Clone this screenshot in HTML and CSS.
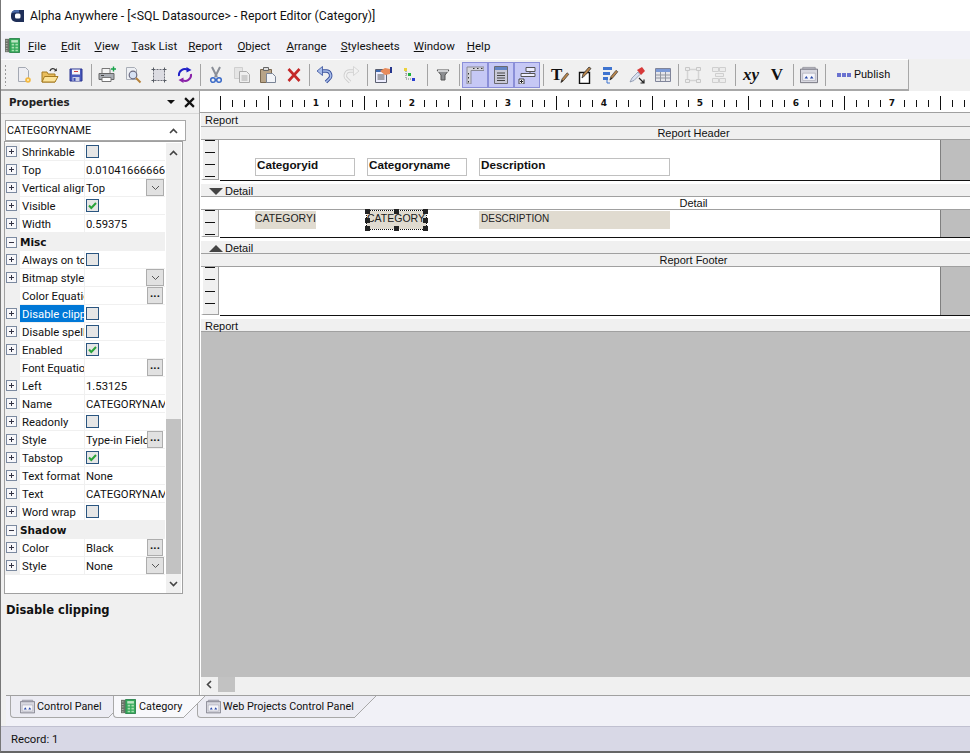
FILE: index.html
```html
<!DOCTYPE html>
<html lang="en">
<head>
    <meta charset="UTF-8">
    <title>Alpha Anywhere - Report Editor</title>
    <link rel="stylesheet" href="styles.css">
</head>
<body>

<svg class="defs" width="0" height="0">
    <symbol id="i-new" viewBox="0 0 18 18"><path d="M3.500 1.500h7l3 3v11h-10z" fill="#eeeef3" stroke="#a4a9b3"/><circle cx="13" cy="14" r="2.800" fill="#f4b942"/><circle cx="13" cy="14" r="1" fill="#fff3c8"/></symbol>
    <symbol id="i-open" viewBox="0 0 18 18"><path d="M1 6h5l1 2h7v8H1z" fill="#e9bd5c" stroke="#a47a20"/><path d="M1 16l2.500-5.500H17L14 16z" fill="#fbe39a" stroke="#a47a20"/><path d="M9 5c1-3 4-3 5.500-1" fill="none" stroke="#333" stroke-width="1.300"/><path d="M13 5.500l3-.5-.5-3z" fill="#333"/></symbol>
    <symbol id="i-save" viewBox="0 0 18 18"><path d="M3 3h12v12H3z" fill="#4a5abc" stroke="#2b3490"/><path d="M5 3.500h8v5H5z" fill="#f4f4f8"/><path d="M7 5h4v1H7z" fill="#d04040"/><path d="M5.500 11h7v4h-7z" fill="#c9cde6"/><path d="M6.500 12h2v3h-2z" fill="#3f4fb4"/></symbol>
    <symbol id="i-print" viewBox="0 0 18 18"><path d="M4 2.500h8v5H4z" fill="#f4f4f4" stroke="#777"/><path d="M1 7.500h15v6H1z" fill="#a9adb3" stroke="#666"/><path d="M4 11.500h9v4H4z" fill="#fff" stroke="#777"/><path d="M3 9h3v1H3z" fill="#444"/><path d="M13 3h5M15.500 .5v5" stroke="#16a34a" stroke-width="1.400"/></symbol>
    <symbol id="i-preview" viewBox="0 0 18 18"><path d="M2.500 1.500h8l2 2v10h-10z" fill="#eef0f4" stroke="#a8adb6"/><circle cx="9" cy="9" r="3.800" fill="#d7e2f5" stroke="#6a6a80" stroke-width="1.200"/><path d="M12 12l4.500 4.500" stroke="#b5813a" stroke-width="2"/></symbol>
    <symbol id="i-frame" viewBox="0 0 18 18"><path d="M3.500 3.500h11v11h-11z" fill="#dcdce2" stroke="#6d6f78" stroke-dasharray="2 1"/><path d="M1.500 3.500h3M13.500 3.500h3M1.500 14.500h3M13.500 14.500h3M3.500 1.500v3M14.500 1.500v3M3.500 13.500v3M14.500 13.500v3" stroke="#555a62"/></symbol>
    <symbol id="i-refresh" viewBox="0 0 18 18"><path d="M3 10a6 6 0 0 1 9-6" fill="none" stroke="#2020c8" stroke-width="2"/><path d="M10.500 1l5 3-5 2.500z" fill="#2020c8"/><path d="M15 8a6 6 0 0 1-9 6" fill="none" stroke="#8a22a8" stroke-width="2"/><path d="M7.500 17l-5-3 5-2.500z" fill="#8a22a8"/></symbol>
    <symbol id="i-cut" viewBox="0 0 18 18"><path d="M5 1l5 10M13 1L8 11" stroke="#8a8f98" stroke-width="2"/><circle cx="6" cy="14" r="2.300" fill="none" stroke="#3a6ac8" stroke-width="1.500"/><circle cx="12" cy="14" r="2.300" fill="none" stroke="#3a6ac8" stroke-width="1.500"/></symbol>
    <symbol id="i-copy" viewBox="0 0 18 18"><path d="M1.500 1.500h8v11h-8z" fill="#e5e5e5" stroke="#cfcfcf"/><path d="M6.500 5.500h7l3 3v8h-10z" fill="#eee" stroke="#ababab"/><path d="M8.500 10h6M8.500 12h6M8.500 14h6" stroke="#aaa"/></symbol>
    <symbol id="i-paste" viewBox="0 0 18 18"><path d="M1.500 3.500h11v13h-11z" fill="#b8a488" stroke="#7a6850"/><path d="M4.500 1.500h5v3h-5z" fill="#ddd" stroke="#666"/><path d="M7.500 7.500h6l3 3v6h-9z" fill="#f2f4f8" stroke="#7a8496"/></symbol>
    <symbol id="i-del" viewBox="0 0 18 18"><path d="M3.500 3l11 12M14.500 3l-11 12" stroke="#c42828" stroke-width="2.600"/></symbol>
    <symbol id="i-undo" viewBox="0 0 18 18"><path d="M5 5h5a4.500 4.500 0 0 1 3 8l-3 3" fill="none" stroke="#38509c" stroke-width="3.400"/><path d="M5 5h5a4.500 4.500 0 0 1 3 8l-3 3" fill="none" stroke="#a9bde9" stroke-width="1.600"/><path d="M6.500 .5L1 5l5.500 4.500z" fill="#a9bde9" stroke="#38509c" stroke-width=".8"/></symbol>
    <symbol id="i-redo" viewBox="0 0 18 18"><path d="M13 5H8a4.500 4.500 0 0 0-3 8l3 3" fill="none" stroke="#cfcfcf" stroke-width="3.400"/><path d="M13 5H8a4.500 4.500 0 0 0-3 8l3 3" fill="none" stroke="#f2f2f2" stroke-width="1.600"/><path d="M11.500 .5L17 5l-5.500 4.500z" fill="#f2f2f2" stroke="#cfcfcf" stroke-width=".8"/></symbol>
    <symbol id="i-form" viewBox="0 0 18 18"><path d="M1.500 3.500h11v13h-11z" fill="#eef" stroke="#5a5f70"/><path d="M2 4h10v2H2z" fill="#3f6ab0"/><path d="M3.500 9h7M3.500 11h7M3.500 13h7" stroke="#555"/><path d="M6 5l5-3 5 1v5l-5 1z" fill="#e88c5c"/><path d="M16 1h2v6h-2z" fill="#26368c"/></symbol>
    <symbol id="i-tree" viewBox="0 0 18 18"><path d="M6 5v8h6M6 8h3" stroke="#777" fill="none" stroke-dasharray="1 1"/><path d="M4 2h3v3H4z" fill="#ecd23c"/><path d="M8 7h3v3H8z" fill="#1fb33a"/><path d="M12 12h3v3h-3z" fill="#2a3fd0"/></symbol>
    <symbol id="i-filter" viewBox="0 0 18 18"><path d="M3 4h12l-4 5v5H7V9z" fill="#8b8d90" stroke="#555"/><path d="M4 4h10v2H4z" fill="#cfd0d2"/></symbol>
    <symbol id="i-ruler" viewBox="0 0 18 18"><path d="M1 1h17v3.500H5V18H1z" fill="#d4d4dc" stroke="#8a8a96"/><path d="M7 2.500h1.500M11 2.500h1.500M15 2.500h1.500M2.500 7v1.500M2.500 11v1.500M2.500 15v1.500" stroke="#333"/></symbol>
    <symbol id="i-sect" viewBox="0 0 18 18"><path d="M2.500 .5h13v17h-13z" fill="#c9c9d8" stroke="#6a6a70"/><path d="M3 1h12v3H3z" fill="#6384c4"/><path d="M5 7h8M5 9.500h8M5 12h8M5 14.500h8" stroke="#444"/></symbol>
    <symbol id="i-group" viewBox="0 0 18 18"><path d="M8 1.500h9v4H8zM3 7.500h14v3H3z" fill="#eef" stroke="#555"/><path d="M1 13h5v5H1z" fill="#fff" stroke="#444"/><path d="M2 15.500h3M3.500 14v3" stroke="#222"/><path d="M12 6v1" stroke="#555"/></symbol>
    <symbol id="i-pen" viewBox="0 0 18 18"><path d="M4 16l1.500-5 7-8.500 2.500 2-7 8.500z" fill="#b9854a" stroke="#333" stroke-width=".9"/><path d="M4 16l1.500-4 2 1.700z" fill="#222"/></symbol>
    <symbol id="i-box" viewBox="0 0 18 18"><path d="M3.500 6.500h10v11h-10z" fill="#fff" stroke="#111" stroke-width="1.400"/><path d="M6 12l1-4 6-7 2 1.500-6 7z" fill="#b9854a" stroke="#333" stroke-width=".8"/></symbol>
    <symbol id="i-list" viewBox="0 0 18 18"><path d="M1 1h9v3H1zM1 6h7v3H1zM1 11h5v3H1z" fill="#3f74d0"/><path d="M5 14v3h3" stroke="#3f74d0" fill="none"/><use href="#i-pen" x="5" y="0" width="13" height="18"/></symbol>
    <symbol id="i-pin" viewBox="0 0 18 18"><path d="M9 4l5-3 3 4-4 4z" fill="#d83a3a"/><path d="M10 6L4 12l-2 4 4-1.500 6-6z" fill="#d8e0f0" stroke="#7a86a0" stroke-width=".7"/><path d="M11 12l5 5M16 13.500V17h-3.500" stroke="#222" fill="none" stroke-width="1.200"/></symbol>
    <symbol id="i-table" viewBox="0 0 18 18"><path d="M1.500 2.500h15v13h-15z" fill="#e6e6ea" stroke="#80859a"/><path d="M2 3h14v3H2z" fill="#7c9ad6"/><path d="M6.500 6v9M11.500 6v9M2 9h14M2 12h14" stroke="#90959f"/></symbol>
    <symbol id="i-align" viewBox="0 0 18 18"><path d="M3.500 3.500h11v11h-11z" fill="none" stroke="#d4d4d4" stroke-width="1.500"/><path d="M1.500 1.500h4v3h-4zM12.500 1.500h4v3h-4zM1.500 13.500h4v3h-4zM12.500 13.500h4v3h-4z" fill="#ececec" stroke="#c8c8c8"/></symbol>
    <symbol id="i-size" viewBox="0 0 18 18"><path d="M2.500 1.500h6v4h-6zM9.500 1.500h6v4h-6zM5.500 7.500h8v3h-8zM2.500 12.500h6v4h-6zM9.500 12.500h6v4h-6z" fill="#ececec" stroke="#cfcfcf"/></symbol>
    <symbol id="i-panel" viewBox="0 0 20 18"><path d="M.5 2.500h19v15H.5z" fill="#d8d8e0" stroke="#6c6c78"/><path d="M3 .5h14v2H3z" fill="#b6b6c0" stroke="#7c7c88" stroke-width=".6"/><path d="M3 7h14v8H3z" fill="#f5f5fa" stroke="#9a9aa6" stroke-width=".6"/><path d="M5 13l2-3 2 3zM11 13l2-3 2 3z" fill="#2a4aa8"/></symbol>
    <symbol id="i-sheet" viewBox="0 0 18 18"><path d="M5.500 .5h12v17h-12z" fill="#35a85a" stroke="#1e7a40"/><path d="M0 1h5v16H0z" fill="#6d736a"/><path d="M1 3h2v1H1zM1 6h2v1H1zM1 9h2v1H1zM1 12h2v1H1zM1 15h2v1H1z" fill="#c8ccc4"/><path d="M7.500 2.500h8v3h-8z" fill="#bfe6c4"/><path d="M8 7h3v2H8zM12.500 7h3v2h-3zM8 10.500h3v2H8zM12.500 10.500h3v2h-3zM8 14h3v2H8zM12.500 14h3v2h-3z" fill="#a8e0b0"/></symbol>
    <symbol id="i-check" viewBox="0 0 11 11"><path d="M2 5.500l2.300 2.500L9 3" fill="none" stroke="#2aa33a" stroke-width="2"/></symbol>
</svg>

<div class="app">
    <div class="titlebar">
        <svg class="app-logo" viewBox="0 0 14 14"><path d="M6 1h8v12H6a5 5 0 0 1-5-5V6a5 5 0 0 1 5-5z" fill="#1f2f58"/><path d="M1.500 4a5 5 0 0 1 4.500-3h3v2.500H5z" fill="#4a6aa8"/><rect x="5" y="4.500" width="5.500" height="5" rx="1.500" fill="#fff"/></svg>
        <span>Alpha Anywhere - [&lt;SQL Datasource&gt; - Report Editor (Category)]</span>
    </div>

    <div class="menubar">
        <svg class="menu-icon"><use href="#i-sheet"/></svg>
        <span class="menu-item m-wide"><u>F</u>ile</span>
        <span class="menu-item"><u>E</u>dit</span>
        <span class="menu-item m-tight"><u>V</u>iew</span>
        <span class="menu-item m-tighter"><u>T</u>ask List</span>
        <span class="menu-item m-wide"><u>R</u>eport</span>
        <span class="menu-item m-widest"><u>O</u>bject</span>
        <span class="menu-item"><u>A</u>rrange</span>
        <span class="menu-item"><u>S</u>tylesheets</span>
        <span class="menu-item m-tight"><u>W</u>indow</span>
        <span class="menu-item"><u>H</u>elp</span>
    </div>

    <div class="toolbar">
        <span class="grip"></span>
        <span class="tool"><svg><use href="#i-new"/></svg></span>
        <span class="tool"><svg><use href="#i-open"/></svg></span>
        <span class="tool"><svg><use href="#i-save"/></svg></span>
        <span class="sep"></span>
        <span class="tool"><svg><use href="#i-print"/></svg></span>
        <span class="tool"><svg><use href="#i-preview"/></svg></span>
        <span class="tool"><svg><use href="#i-frame"/></svg></span>
        <span class="tool"><svg><use href="#i-refresh"/></svg></span>
        <span class="sep"></span>
        <span class="tool"><svg><use href="#i-cut"/></svg></span>
        <span class="tool"><svg><use href="#i-copy"/></svg></span>
        <span class="tool"><svg><use href="#i-paste"/></svg></span>
        <span class="tool"><svg><use href="#i-del"/></svg></span>
        <span class="sep"></span>
        <span class="tool"><svg><use href="#i-undo"/></svg></span>
        <span class="tool"><svg><use href="#i-redo"/></svg></span>
        <span class="sep sep-wide"></span>
        <span class="tool"><svg><use href="#i-form"/></svg></span>
        <span class="tool"><svg><use href="#i-tree"/></svg></span>
        <span class="sep sep-left"></span>
        <span class="tool"><svg><use href="#i-filter"/></svg></span>
        <span class="sep sep-wide"></span>
        <span class="tool tool-on"><svg><use href="#i-ruler"/></svg></span>
        <span class="tool tool-on"><svg><use href="#i-sect"/></svg></span>
        <span class="tool tool-on"><svg><use href="#i-group"/></svg></span>
        <span class="sep sep-wide"></span>
        <span class="tool tool-t">T<svg class="tool-t-pen"><use href="#i-pen"/></svg></span>
        <span class="tool"><svg><use href="#i-box"/></svg></span>
        <span class="tool"><svg><use href="#i-list"/></svg></span>
        <span class="tool"><svg><use href="#i-pin"/></svg></span>
        <span class="tool"><svg><use href="#i-table"/></svg></span>
        <span class="sep sep-tight"></span>
        <span class="tool"><svg><use href="#i-align"/></svg></span>
        <span class="tool"><svg><use href="#i-size"/></svg></span>
        <span class="sep sep-wide"></span>
        <span class="tool tool-serif"><i>xy</i></span>
        <span class="tool tool-serif">V</span>
        <span class="sep sep-wide"></span>
        <span class="tool"><svg><use href="#i-panel"/></svg></span>
        <span class="sep sep-wide"></span>
        <span class="publish"><span class="publish-dots"><b></b><b></b><b></b></span>Publish</span>
    </div>

    <div class="main">
        <div class="props-panel">
            <div class="props-head">
                <span class="props-title">Properties</span>
                <span class="props-arrow"></span>
                <svg class="props-close" viewBox="0 0 10 10"><path d="M1 1l8 8M9 1l-8 8" stroke="#111" stroke-width="2"/></svg>
            </div>
            <div class="props-combo">
                <span>CATEGORYNAME</span>
                <svg class="chev" viewBox="0 0 9 6"><path d="M1 5l3.500-3.500L8 5" fill="none" stroke="#444" stroke-width="1.600"/></svg>
            </div>
            <div class="props-list">
                <div class="props-rows">
                    <div class="prop"><span class="exp"></span><span class="name">Shrinkable</span><span class="val"><span class="cb"></span></span></div>
                    <div class="prop"><span class="exp"></span><span class="name">Top</span><span class="val">0.01041666666</span></div>
                    <div class="prop"><span class="exp"></span><span class="name">Vertical align</span><span class="val">Top<span class="dd"><svg class="chev" viewBox="0 0 9 6"><path d="M1 1l3.500 3.500L8 1" fill="none" stroke="#555"/></svg></span></span></div>
                    <div class="prop"><span class="exp"></span><span class="name">Visible</span><span class="val"><span class="cb"><svg><use href="#i-check"/></svg></span></span></div>
                    <div class="prop"><span class="exp"></span><span class="name">Width</span><span class="val">0.59375</span></div>
                    <div class="prop-group"><span class="exp exp-open"></span><b>Misc</b></div>
                    <div class="prop"><span class="exp"></span><span class="name">Always on top</span><span class="val"><span class="cb"></span></span></div>
                    <div class="prop"><span class="exp"></span><span class="name">Bitmap style</span><span class="val"><span class="dd"><svg class="chev" viewBox="0 0 9 6"><path d="M1 1l3.500 3.500L8 1" fill="none" stroke="#555"/></svg></span></span></div>
                    <div class="prop"><span class="noexp"></span><span class="name">Color Equation</span><span class="val"><span class="dots">...</span></span></div>
                    <div class="prop"><span class="exp"></span><span class="name name-sel">Disable clipping</span><span class="val"><span class="cb"></span></span></div>
                    <div class="prop"><span class="exp"></span><span class="name">Disable spellcheck</span><span class="val"><span class="cb"></span></span></div>
                    <div class="prop"><span class="exp"></span><span class="name">Enabled</span><span class="val"><span class="cb"><svg><use href="#i-check"/></svg></span></span></div>
                    <div class="prop"><span class="noexp"></span><span class="name">Font Equation</span><span class="val"><span class="dots">...</span></span></div>
                    <div class="prop"><span class="exp"></span><span class="name">Left</span><span class="val">1.53125</span></div>
                    <div class="prop"><span class="exp"></span><span class="name">Name</span><span class="val">CATEGORYNAME</span></div>
                    <div class="prop"><span class="exp"></span><span class="name">Readonly</span><span class="val"><span class="cb"></span></span></div>
                    <div class="prop"><span class="exp"></span><span class="name">Style</span><span class="val">Type-in Field<span class="dots">...</span></span></div>
                    <div class="prop"><span class="exp"></span><span class="name">Tabstop</span><span class="val"><span class="cb"><svg><use href="#i-check"/></svg></span></span></div>
                    <div class="prop"><span class="exp"></span><span class="name">Text format</span><span class="val">None</span></div>
                    <div class="prop"><span class="exp"></span><span class="name">Text</span><span class="val">CATEGORYNAME</span></div>
                    <div class="prop"><span class="exp"></span><span class="name">Word wrap</span><span class="val"><span class="cb"></span></span></div>
                    <div class="prop-group"><span class="exp exp-open"></span><b>Shadow</b></div>
                    <div class="prop"><span class="exp"></span><span class="name">Color</span><span class="val">Black<span class="dots">...</span></span></div>
                    <div class="prop"><span class="exp"></span><span class="name">Style</span><span class="val">None<span class="dd"><svg class="chev" viewBox="0 0 9 6"><path d="M1 1l3.500 3.500L8 1" fill="none" stroke="#555"/></svg></span></span></div>
                </div>
                <div class="vscroll">
                    <svg class="chev" viewBox="0 0 9 6"><path d="M1 5l3.500-3.500L8 5" fill="none" stroke="#444" stroke-width="1.600"/></svg>
                    <div class="vscroll-track"><div class="vscroll-thumb"></div></div>
                    <svg class="chev" viewBox="0 0 9 6"><path d="M1 1l3.500 3.500L8 1" fill="none" stroke="#444" stroke-width="1.600"/></svg>
                </div>
            </div>
            <div class="props-desc">Disable clipping</div>
        </div>

        <div class="designer">
            <div class="ruler">
                <span class="ruler-num ruler-first"><span>1</span></span>
                <span class="ruler-num"><span>2</span></span>
                <span class="ruler-num"><span>3</span></span>
                <span class="ruler-num"><span>4</span></span>
                <span class="ruler-num"><span>5</span></span>
                <span class="ruler-num"><span>6</span></span>
                <span class="ruler-num"><span>7</span></span>
            </div>

            <div class="bar">Report</div>
            <div class="band-title">Report Header</div>
            <div class="band">
                <div class="vruler"><i></i><i></i><i></i><i></i></div>
                <div class="band-body band-h">
                    <div class="canvas">
                        <span class="field f-1 f-head">Categoryid</span>
                        <span class="field f-2 f-head">Categoryname</span>
                        <span class="field f-3 f-head">Description</span>
                    </div>
                    <div class="band-end"></div>
                </div>
            </div>

            <div class="bar bar-gap"><span class="tri tri-down"></span>Detail</div>
            <div class="band-title band-title-white">Detail</div>
            <div class="band">
                <div class="vruler"><i></i><i></i><i></i></div>
                <div class="band-body band-d">
                    <div class="canvas">
                        <span class="field f-1 f-data f-id">CATEGORYI</span>
                        <span class="field f-2 f-data f-sel">CATEGORY
                            <b class="h h-tl"></b><b class="h h-tm"></b><b class="h h-tr"></b>
                            <b class="h h-ml"></b><b class="h h-mr"></b>
                            <b class="h h-bl"></b><b class="h h-bm"></b><b class="h h-br"></b>
                        </span>
                        <span class="field f-3 f-data f-desc">DESCRIPTION</span>
                    </div>
                    <div class="band-end"></div>
                </div>
            </div>

            <div class="bar bar-gap"><span class="tri tri-up"></span>Detail</div>
            <div class="band-title">Report Footer</div>
            <div class="band">
                <div class="vruler"><i></i><i></i><i></i><i></i></div>
                <div class="band-body band-f">
                    <div class="canvas"></div>
                    <div class="band-end"></div>
                </div>
            </div>

            <div class="bar bar-gap">Report</div>
            <div class="grey-area"></div>
            <div class="hscroll">
                <svg class="chev" viewBox="0 0 6 9"><path d="M5 1L1.500 4.500 5 8" fill="none" stroke="#444" stroke-width="1.600"/></svg>
                <span class="hscroll-thumb"></span>
            </div>
        </div>
    </div>

    <div class="tabs">
        <span class="tab tab-a"><svg><use href="#i-panel"/></svg>Control Panel</span>
        <span class="tab tab-b tab-on"><svg><use href="#i-sheet"/></svg>Category</span>
        <span class="tab tab-c"><svg><use href="#i-panel"/></svg>Web Projects Control Panel</span>
    </div>

    <div class="statusbar">Record: 1</div>
</div>

</body>
</html>
```

FILE: styles.css
```css
* {
    box-sizing: border-box;
}

html, body {
    margin: 0;
    height: 100%;
    overflow: hidden;
}

body {
    font-family: Roboto, "Noto Sans", sans-serif;
    font-size: 12px;
    color: #111;
    background: #f0f0f0;
}

.defs {
    position: absolute;
}

.app {
    display: flex;
    flex-direction: column;
    height: 753px;
    border-left: 1px solid #777;
    border-bottom: 2px solid #666;
}

/* title and menu */
.titlebar {
    display: flex;
    align-items: center;
    height: 31px;
    padding-left: 9px;
    gap: 6px;
    background: #fff;
    font-size: 12.250px;
}

.app-logo {
    width: 14px;
    height: 14px;
}

.menubar {
    display: flex;
    align-items: center;
    height: 28px;
    padding: 2px 0 0 4px;
    background: #f1f1f7;
    font-size: 11.500px;
}

.menu-icon {
    width: 15px;
    height: 15px;
    margin: -1px 8px 0 0;
}

.menu-item {
    margin-right: 14px;
}

.menu-item.m-wide {
    margin-right: 15px;
}

.menu-item.m-widest {
    margin-right: 16px;
}

.menu-item.m-tight {
    margin-right: 12px;
}

.menu-item.m-tighter {
    margin-right: 11px;
}

/* toolbar */
.toolbar {
    display: flex;
    align-items: center;
    width: 908px;
    height: 32px;
    padding-left: 3px;
    background: #f0f0f0;
    border-top: 1px solid #fff;
    border-right: 1px solid #a8a8a8;
    border-bottom: 2px solid #a8a8a8;
}

.grip {
    width: 7px;
    height: 22px;
    background-image: radial-gradient(#999 1px, transparent 1.200px);
    background-size: 7px 4px;
    background-position: -2px 0;
}

.tool {
    display: flex;
    align-items: center;
    justify-content: center;
    width: 26px;
    height: 26px;
    flex: none;
}

.tool svg {
    width: 18px;
    height: 18px;
}

.tool-on {
    background: #c6c8f5;
    border: 1px solid #8b8fd8;
}

.tool-t {
    position: relative;
    font: bold 17px "Liberation Serif", serif;
    justify-content: flex-start;
    padding-left: 5px;
}

.tool-t .tool-t-pen {
    position: absolute;
    left: 12px;
    top: 8px;
    width: 13px;
    height: 15px;
}

.tool-serif {
    font: bold 17px "Liberation Serif", serif;
}

.sep {
    width: 1px;
    height: 22px;
    margin: 0 2px;
    background: #a4a4a4;
    flex: none;
}

.sep-wide {
    margin: 0 2px 0 3px;
}

.sep-left {
    margin: 0 2px 0 5px;
}

.sep-tight {
    margin: 0 1px 0 2px;
}

.publish {
    display: flex;
    align-items: center;
    margin-left: 9px;
    font-size: 11px;
}

.publish-dots {
    display: flex;
    gap: 1px;
    margin-right: 3px;
}

.publish-dots b {
    width: 4px;
    height: 4px;
    background: #6a72d0;
}

/* main area */
.main {
    display: flex;
    flex: 1;
    min-height: 0;
}

.props-panel {
    width: 199px;
    flex: none;
    display: flex;
    flex-direction: column;
    border-right: 1px solid #a8a8a8;
    padding-left: 3px;
    font-size: 11.300px;
}

.props-head {
    display: flex;
    align-items: center;
    height: 23px;
    padding: 0 4px 0 8px;
    border-bottom: 1px solid #d8d8d8;
    margin-left: -3px;
}

.props-title {
    flex: 1;
    font: bold 10.300px "DejaVu Sans", sans-serif;
    color: #222;
}

.props-arrow {
    width: 0;
    height: 0;
    margin-right: 9px;
    border-left: 4px solid transparent;
    border-right: 4px solid transparent;
    border-top: 4px solid #111;
}

.props-close {
    width: 11px;
    height: 11px;
}

.props-combo {
    display: flex;
    align-items: center;
    justify-content: space-between;
    width: 181px;
    height: 21px;
    margin: 6px 0 0 1px;
    padding: 0 7px 0 1px;
    background: #fff;
    border: 1px solid #a8a8a8;
    font-size: 10.800px;
}

.chev {
    width: 9px;
    height: 6px;
    flex: none;
}

.props-list {
    display: flex;
    width: 179px;
    height: 453px;
    padding: 1px 1px 0 0;
    background: #fff;
    border: 1px solid #a0a0a0;
}

.props-rows {
    width: 160px;
}

.prop, .prop-group {
    display: flex;
    align-items: stretch;
    height: 18px;
}

.prop {
    border-bottom: 1px solid #f0f0f0;
}

.prop-group {
    background: #f0f0f0;
    align-items: center;
}

.prop-group b {
    font: bold 10.500px "DejaVu Sans", sans-serif;
}

.exp, .noexp {
    width: 15px;
    flex: none;
    display: flex;
    align-items: center;
    padding-left: 1px;
    background: #f0f0f0;
}

.exp::before {
    content: "";
    width: 9px;
    height: 9px;
    border: 1px solid #7c8aa0;
    background:
        linear-gradient(#334, #334) center / 5px 1px no-repeat,
        linear-gradient(#334, #334) center / 1px 5px no-repeat,
        #f7f7fa;
}

.exp-open::before {
    background:
        linear-gradient(#334, #334) center / 5px 1px no-repeat,
        #f7f7fa;
}

.name {
    width: 65px;
    flex: none;
    padding-left: 2px;
    overflow: hidden;
    white-space: nowrap;
    line-height: 19px;
    border-right: 1px solid #f0f0f0;
}

.name-sel {
    background: #0078d7;
    color: #fff;
}

.val {
    position: relative;
    flex: 1;
    display: flex;
    align-items: center;
    padding: 1px 0 0 1px;
    overflow: hidden;
    white-space: nowrap;
}

.cb {
    display: flex;
    align-items: center;
    justify-content: center;
    width: 13px;
    height: 13px;
    margin-top: -1px;
    background: #e6e6e6;
    border: 1px solid #2a5580;
}

.cb svg {
    width: 11px;
    height: 11px;
}

.dd, .dots {
    position: absolute;
    top: 0;
    display: flex;
    align-items: center;
    justify-content: center;
    height: 17px;
    background: #e1e1e1;
    border: 1px solid #adadad;
}

.dd {
    right: 1px;
    width: 18px;
}

.dots {
    right: 2px;
    width: 16px;
    line-height: 10px;
    padding-bottom: 3px;
    font-weight: bold;
}

.vscroll {
    width: 16px;
    margin-left: 1px;
    display: flex;
    flex-direction: column;
    align-items: center;
    background: #f0f0f0;
    padding: 7px 0 6px;
}

.vscroll-track {
    flex: 1;
    width: 15px;
}

.vscroll-thumb {
    height: 155px;
    margin-top: 263px;
    background: #c2c2c2;
}

.props-desc {
    margin: 9px 0 0 2px;
    font: bold 11.500px "DejaVu Sans", sans-serif;
}

/* report designer */
.designer {
    flex: 1;
    display: flex;
    flex-direction: column;
    min-width: 0;
    background: #fff;
    padding-left: 1px;
}

.ruler {
    display: flex;
    height: 22px;
    flex: none;
    padding-top: 5px;
    margin-left: -1px;
    background-color: #fff;
    background-image:
        repeating-linear-gradient(90deg, #111 0 1px, transparent 1px 48px),
        repeating-linear-gradient(90deg, #111 0 1px, transparent 1px 12px);
    background-size: 100% 14px, 100% 7px;
    background-position: 20px 5px, 20px 9px;
    background-repeat: no-repeat;
    border-bottom: 1px solid #a0a0a0;
    font: bold 9px/15px "DejaVu Sans", sans-serif;
}

.ruler-num {
    flex: 0 0 96px;
    text-align: center;
}

.ruler-num span {
    display: inline-block;
    width: 7px;
    background: #fff;
}

.ruler-first {
    margin-left: 68px;
}

.bar, .band-title {
    height: 14px;
    flex: none;
    background: #f0f0f0;
    border-bottom: 1px solid #a0a0a0;
    font: 11px/14px "Liberation Sans", sans-serif;
}

.bar {
    padding-left: 4px;
}

.bar-gap {
    height: 13px;
    margin-top: 3px;
    line-height: 14px;
}

.band-title {
    height: 13px;
    line-height: 13px;
    text-align: center;
    padding-left: 216px;
}

.band-title-white {
    background: #fff;
}

.band {
    display: flex;
    flex: none;
}

.vruler {
    width: 18px;
    flex: none;
    padding-left: 2px;
    display: flex;
    flex-direction: column;
    gap: 11px;
    background: #f0f0f0;
    border-right: 1px solid #a0a0a0;
    border-bottom: 1px solid #a0a0a0;
    border-left: 2px solid #fff;
    margin-bottom: 1px;
}

.vruler i {
    display: block;
    width: 10px;
    height: 1px;
    background: #111;
}

.band-body {
    flex: 1;
    display: flex;
    margin-left: 1px;
    border-bottom: 1px solid #111;
}

.band-h {
    height: 41px;
}

.band-d {
    height: 28px;
}

.band-f {
    height: 49px;
}

.canvas {
    position: relative;
    flex: 1;
    background: #fff;
}

.band-end {
    width: 30px;
    flex: none;
    background: #bebebe;
    border-left: 1px solid #808080;
}

.field {
    position: absolute;
    height: 18px;
    font: 10.500px/14px "Liberation Sans", sans-serif;
    white-space: nowrap;
    overflow: hidden;
}

.f-1 {
    left: 35px;
    width: 100px;
}

.f-2 {
    left: 147px;
    width: 100px;
}

.f-3 {
    left: 259px;
    width: 191px;
}

.f-head {
    top: 18px;
    border: 1px solid #c0c0c0;
    padding-left: 1px;
    line-height: 12px;
    font-weight: bold;
    font-size: 11.700px;
}

.f-data {
    top: 1px;
    background: #e0dbd0;
    color: #222;
}

.f-id {
    width: 61px;
}

.f-desc {
    padding-left: 2px;
    line-height: 15px;
    font-size: 10px;
}

.f-sel {
    width: 59px;
    overflow: visible;
    outline: 1px dotted #111;
}

.h {
    position: absolute;
    width: 5px;
    height: 5px;
    background: #222;
}

.h-tl { left: -2px; top: -2px; }
.h-tm { left: 27px; top: -2px; }
.h-tr { right: -2px; top: -2px; }
.h-ml { left: -2px; top: 7px; }
.h-mr { right: -2px; top: 7px; }
.h-bl { left: -2px; bottom: -2px; }
.h-bm { left: 27px; bottom: -2px; }
.h-br { right: -2px; bottom: -2px; }

.tri {
    display: inline-block;
    width: 0;
    height: 0;
    margin: 0 2px 0 4px;
    border-left: 7px solid transparent;
    border-right: 7px solid transparent;
}

.tri-down {
    border-top: 7px solid #444;
}

.tri-up {
    border-bottom: 7px solid #444;
}

.grey-area {
    flex: 1;
    background: #bebebe;
}

.hscroll {
    display: flex;
    align-items: center;
    height: 18px;
    flex: none;
    padding: 0 0 3px 5px;
    background: #f0f0f0;
}

.hscroll .chev {
    width: 6px;
    height: 9px;
}

.hscroll-thumb {
    width: 17px;
    height: 15px;
    margin-left: 6px;
    background: #c2c2c2;
}

/* bottom tabs */
.tabs {
    display: flex;
    height: 31px;
    flex: none;
    padding-left: 4px;
    margin-left: 5px;
    background: #f1f1f7;
    border-top: 1px solid #a0a0a0;
    font-size: 10.800px;
}

.tab {
    position: relative;
    display: flex;
    align-items: center;
    gap: 2px;
    height: 22px;
    padding-left: 9px;
    white-space: nowrap;
    background: #ececf3;
    border-left: 1px solid #a8a8a8;
    border-bottom: 1px solid #a8a8a8;
    border-bottom-left-radius: 4px;
}

.tab::after {
    content: "";
    position: absolute;
    left: 100%;
    top: 0;
    width: 21px;
    height: 21px;
    background: linear-gradient(to top left, transparent 49%, #a8a8a8 49% 52%, #ececf3 52%);
}

.tab svg {
    width: 15px;
    height: 15px;
    flex: none;
}

.tab-a {
    width: 99px;
    margin-right: 4px;
}

.tab-b {
    width: 71px;
    margin-right: 13px;
    padding-left: 7px;
    gap: 3px;
}

.tab-c {
    width: 158px;
    padding-left: 8px;
}

.tab-on {
    background: #f8f8fb;
    z-index: 2;
}

.tab-on::after {
    background: linear-gradient(to top left, transparent 49%, #a8a8a8 49% 52%, #f8f8fb 52%);
}

.statusbar {
    display: flex;
    align-items: center;
    height: 25px;
    flex: none;
    padding-left: 10px;
    background: #d8d8e6;
    border-top: 1px solid #c0c0d0;
    font-size: 11.300px;
}
```
